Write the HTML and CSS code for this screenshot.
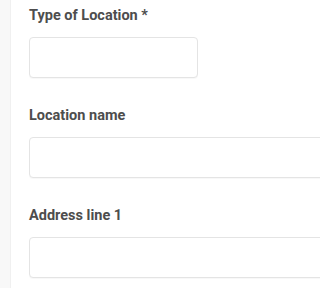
FILE: index.html
```html
<!DOCTYPE html>
<html>
<head>
<meta charset="utf-8">
<link rel="stylesheet" href="styles.css">
</head>
<body>
<div class="page">
  <div class="rail"></div>
  <form class="form">
    <div class="field">
      <label class="label">Type of Location *</label>
      <div class="input short"></div>
    </div>
    <div class="field">
      <label class="label">Location name</label>
      <div class="input wide"></div>
    </div>
    <div class="field">
      <label class="label">Address line 1</label>
      <div class="input wide"></div>
    </div>
  </form>
</div>
</body>
</html>
```
FILE: styles.css
```css
html, body {
  margin: 0;
  padding: 0;
  background: #ffffff;
  overflow: hidden;
}
.page {
  display: flex;
  width: 100%;
  height: 100vh;
  overflow: hidden;
}
.rail {
  width: 10px;
  flex: none;
  background: #f8f8f8;
  border-right: 1px solid #f0f0f0;
}
.form {
  display: flex;
  flex-direction: column;
  padding: 6px 0 0 18px;
  gap: 28px;
  flex: 1;
  min-width: 0;
  overflow: hidden;
}
.field {
  display: flex;
  flex-direction: column;
  gap: 11px;
}
.label {
  font-family: Roboto, "Liberation Sans", sans-serif;
  font-weight: 700;
  font-size: 14.5px;
  line-height: 20px;
  color: #4d4d4d;
}
.input {
  box-sizing: border-box;
  height: 41px;
  border: 1px solid #e4e4e4;
  border-radius: 4px;
  background: #fff;
  box-shadow: 0 1px 1px rgba(0,0,0,0.03);
  flex: none;
}
.short { width: 169px; }
.wide { width: calc(100% + 40px); }
```
